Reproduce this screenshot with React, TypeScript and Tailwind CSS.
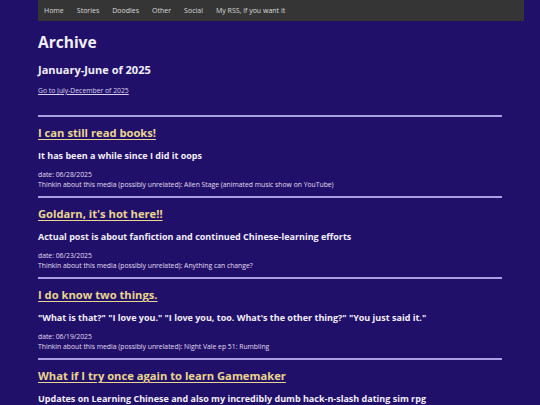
const nav = ["Home", "Stories", "Doodles", "Other", "Social", "My RSS, if you want it"];

type Post = { title: string; sub: string; date: string; media: string };

const posts: Post[] = [
  {
    title: "I can still read books!",
    sub: "It has been a while since I did it oops",
    date: "06/28/2025",
    media: "Alien Stage (animated music show on YouTube)",
  },
  {
    title: "Goldarn, it's hot here!!",
    sub: "Actual post is about fanfiction and continued Chinese-learning efforts",
    date: "06/23/2025",
    media: "Anything can change?",
  },
  {
    title: "I do know two things.",
    sub: "\"What is that?\" \"I love you.\" \"I love you, too. What's the other thing?\" \"You just said it.\"",
    date: "06/19/2025",
    media: "Night Vale ep 51: Rumbling",
  },
  {
    title: "What if I try once again to learn Gamemaker",
    sub: "Updates on Learning Chinese and also my incredibly dumb hack-n-slash dating sim rpg",
    date: "06/14/2025",
    media: "Gamemaker tutorials",
  },
];

export default function App() {
  return (
    <div
      className="h-screen bg-[#21106a] text-[#f2eef8] overflow-hidden"
      style={{ fontFamily: '"Open Sans", "Noto Sans", sans-serif' }}
    >
      <div className="ml-[38px] w-[486px]">
        <nav className="h-[21px] bg-[#353535] flex items-center pl-[6px] gap-[13px] text-[7px] text-[#dcdcdc]">
          {nav.map((n) => (
            <a key={n} className="leading-none">{n}</a>
          ))}
        </nav>

        <div className="w-[464px]">
          <h1 className="mt-[11px] text-[15.5px] leading-[20px] font-bold">Archive</h1>
          <h2 className="mt-[10px] text-[11px] leading-[16px] font-bold">January-June of 2025</h2>
          <a className="block mt-[8px] text-[6.8px] leading-[10px] underline text-[#d8d0ee]">
            Go to July-December of 2025
          </a>
          <div className="mt-[19px] h-[2px] bg-[#a89ee0]" />

          {posts.map((p) => (
            <div key={p.title}>
              <h3 className="mt-[8px] text-[11.2px] leading-[16px] font-bold text-[#e9d58f] underline underline-offset-2">
                {p.title}
              </h3>
              <p className="mt-[9px] text-[9px] leading-[12px] font-bold">{p.sub}</p>
              <div className="mt-[8px] text-[6.8px] leading-[10px] text-[#e2ddf0]">
                <div>date: {p.date}</div>
                <div>Thinkin about this media (possibly unrelated): {p.media}</div>
              </div>
              <div className="mt-[6px] h-[2px] bg-[#a89ee0]" />
            </div>
          ))}
        </div>
      </div>
    </div>
  );
}
